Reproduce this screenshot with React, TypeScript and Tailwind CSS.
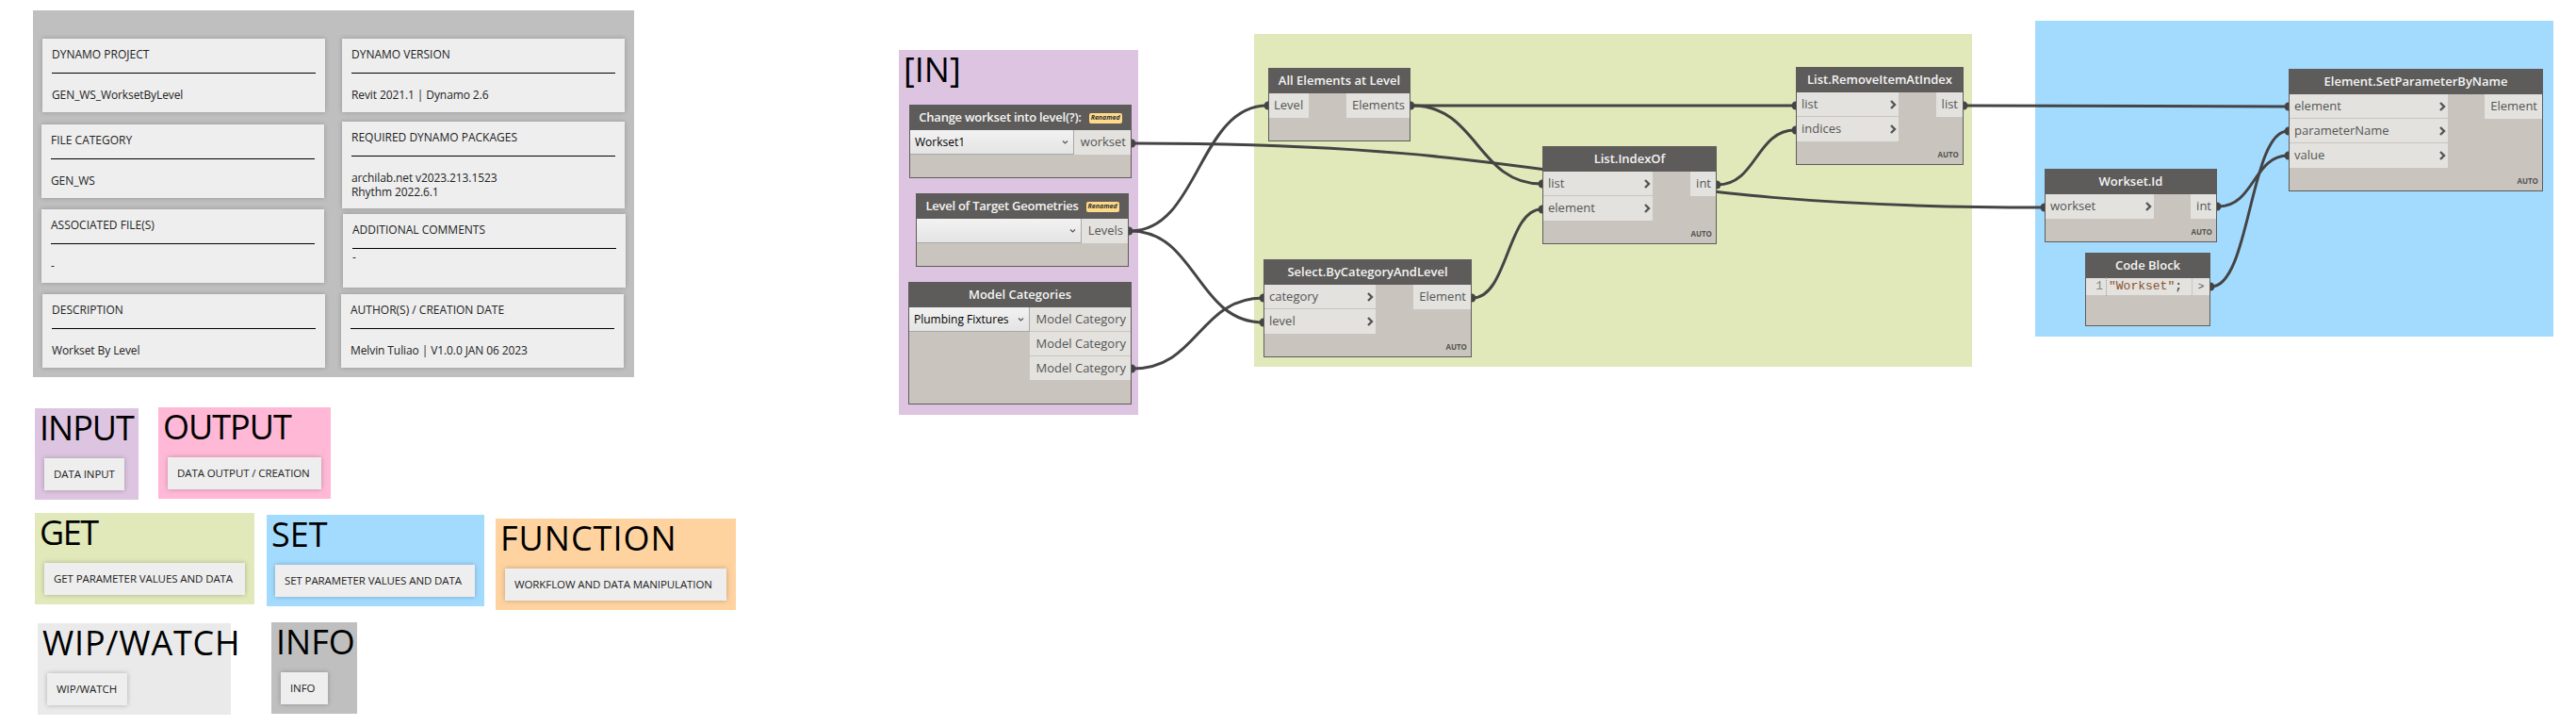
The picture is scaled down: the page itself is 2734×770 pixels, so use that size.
import type { ReactNode } from 'react'

const sans = 'font-["Open_Sans",sans-serif]'

const wires = [
  'M1202 152 C1685 152 1685 220 2168 220',
  'M1200 245 C1272 245 1272 112 1345 112',
  'M1200 245 C1270 245 1270 342 1341 342',
  'M1202 391 C1272 391 1272 316 1341 316',
  'M1499 112 L1905 112',
  'M1499 112 C1568 112 1568 195 1636 195',
  'M1563 316 C1600 316 1600 222 1636 222',
  'M1823 196 C1864 196 1864 138 1905 138',
  'M2085 112 L2428 113',
  'M2355 219 C2392 219 2392 165 2428 165',
  'M2347 304 C2388 304 2388 139 2428 139',
]

const ports = [
  [1201, 152], [1198, 245], [1201, 391],
  [1346, 112], [1497, 112],
  [1341, 316], [1341, 342], [1562, 316],
  [1637, 195], [1637, 222], [1822, 196],
  [1906, 112], [1906, 138], [2084, 112],
  [2170, 220], [2353, 219], [2346, 304],
  [2429, 113], [2429, 139], [2429, 165],
]

function Chevron() {
  return (
    <svg width="8" height="12" viewBox="0 0 8 12" className="shrink-0">
      <path d="M2 2 L6 6 L2 10" fill="none" stroke="#555" strokeWidth="2.4" />
    </svg>
  )
}

function Card({ title, className, children }: { title: string; className: string; children: ReactNode }) {
  return (
    <div className={`w-[300px] bg-[#eeeeee] px-[10px] pt-[8px] shadow-[0_0_5px_rgba(0,0,0,0.22)] ${className}`}>
      <div className="text-[12px] leading-[18px] text-[#222]">{title}</div>
      <div className="mt-[10px] h-px bg-black" />
      {children}
    </div>
  )
}

function Value({ children }: { children: ReactNode }) {
  return <div className="mt-[15px] text-[12px] leading-[15px] tracking-[-0.1px] text-[#222]">{children}</div>
}

function Legend({ title, label, className, buttonClass }: { title: string; label: string; className: string; buttonClass: string }) {
  return (
    <div className={`absolute h-[97px] ${className}`}>
      <div className="h-[53px] pl-[5px] text-[36px] leading-[42px] text-black">{title}</div>
      <div className={`flex h-[34px] items-center bg-[#eeeeee] pl-[10px] text-[11.5px] tracking-[-0.1px] whitespace-nowrap text-[#222] shadow-[0_0_5px_rgba(0,0,0,0.25)] ${buttonClass}`}>
        {label}
      </div>
    </div>
  )
}

function Header({ title, renamed }: { title: string; renamed?: boolean }) {
  return (
    <div className={`flex h-[26px] items-center justify-center gap-[8px] bg-[#5e5c5a] text-[13px] font-semibold whitespace-nowrap text-[#f4f4f4] ${renamed ? 'tracking-[-0.25px]' : ''}`}>
      {title}
      {renamed && (
        <span className="flex h-[11px] w-[35px] items-center justify-center rounded-[2px] bg-[#ffd98a] text-[7px] font-bold tracking-normal text-[#333] italic">
          Renamed
        </span>
      )}
    </div>
  )
}

function Node({ title, inputs, output, inputWidth, outputWidth, auto, className }: {
  title: string
  inputs: string[]
  output: string
  inputWidth: string
  outputWidth: string
  auto?: boolean
  className: string
}) {
  return (
    <div className={`absolute border border-[#5e5c5a] bg-[#c9c5be] ${className}`}>
      <Header title={title} />
      <div className="flex justify-between">
        <div className={inputWidth}>
          {inputs.map((input, i) => (
            <div
              key={input}
              className={`flex h-[26px] items-center justify-between bg-[#e3e2de] pl-[5px] pr-[2px] text-[13px] text-[#555] ${i < inputs.length - 1 ? 'border-b border-[#c9c5be]' : ''}`}
            >
              {input}
              <Chevron />
            </div>
          ))}
        </div>
        <div className={`flex h-[26px] items-center justify-end bg-[#e3e2de] pr-[5px] text-[13px] text-[#555] ${outputWidth}`}>
          {output}
        </div>
      </div>
      <div className="flex h-[24px] items-end justify-end pr-[4px] pb-[5px] text-[8px] leading-[10px] font-bold text-[#555]">
        {auto && 'AUTO'}
      </div>
    </div>
  )
}

function Combo({ value, className }: { value: string; className: string }) {
  return (
    <div className={`flex h-[26px] items-center justify-between border-r border-b border-[#a8a8a8] bg-gradient-to-b from-[#f2f2f2] to-[#e4e4e4] pl-[5px] pr-[5px] text-[12px] whitespace-nowrap text-black ${className}`}>
      <span>{value}</span>
      <svg width="7" height="6" viewBox="0 0 7 6">
        <path d="M1 1.5 L3.5 4 L6 1.5" fill="none" stroke="#555" strokeWidth="1.2" />
      </svg>
    </div>
  )
}

export default function App() {
  return (
    <div className={`relative h-[770px] w-[2734px] overflow-hidden bg-white ${sans}`}>
      {/* info panel */}
      <div className="absolute top-[11px] left-[35px] flex h-[389px] w-[638px] gap-[18px] bg-[#bfbfbf] pl-[9px] pt-[30px]">
        <div>
          <Card title="DYNAMO PROJECT" className="ml-[1px] h-[78px]"><Value>GEN_WS_WorksetByLevel</Value></Card>
          <Card title="FILE CATEGORY" className="mt-[13px] h-[78px]"><Value>GEN_WS</Value></Card>
          <Card title="ASSOCIATED FILE(S)" className="mt-[12px] h-[78px]"><Value>-</Value></Card>
          <Card title="DESCRIPTION" className="ml-[1px] mt-[12px] h-[78px]"><Value>Workset By Level</Value></Card>
        </div>
        <div>
          <Card title="DYNAMO VERSION" className="h-[78px]"><Value>Revit 2021.1 | Dynamo 2.6</Value></Card>
          <Card title="REQUIRED DYNAMO PACKAGES" className="mt-[10px] h-[92px]">
            <Value>archilab.net v2023.213.1523<br />Rhythm 2022.6.1</Value>
          </Card>
          <Card title="ADDITIONAL COMMENTS" className="ml-[1px] mt-[6px] h-[78px]">
            <div className="mt-[1px] text-[12px] leading-[15px] text-[#222]">-</div>
          </Card>
          <Card title="AUTHOR(S) / CREATION DATE" className="mt-[7px] -ml-px h-[78px]"><Value>Melvin Tuliao | V1.0.0 JAN 06 2023</Value></Card>
        </div>
      </div>

      {/* legend */}
      <Legend title="INPUT" label="DATA INPUT" className="top-[433px] left-[37px] w-[110px] bg-[#ddc4e0] tracking-[-1px]" buttonClass="ml-[10px] w-[85px]" />
      <Legend title="OUTPUT" label="DATA OUTPUT / CREATION" className="top-[432px] left-[168px] w-[183px] bg-[#ffb9d6] tracking-[-1px]" buttonClass="ml-[10px] w-[163px]" />
      <Legend title="GET" label="GET PARAMETER VALUES AND DATA" className="top-[544px] left-[37px] w-[233px] bg-[#e1e9ba] tracking-[-1.5px]" buttonClass="ml-[10px] w-[213px]" />
      <Legend title="SET" label="SET PARAMETER VALUES AND DATA" className="top-[546px] left-[283px] w-[231px] bg-[#a3dbff]" buttonClass="ml-[9px] w-[212px]" />
      <Legend title="FUNCTION" label="WORKFLOW AND DATA MANIPULATION" className="top-[550px] left-[526px] w-[255px] bg-[#ffd3a0] tracking-[1px]" buttonClass="ml-[10px] w-[235px]" />
      <Legend title="WIP/WATCH" label="WIP/WATCH" className="top-[661px] left-[40px] w-[205px] bg-[#eaeaea] tracking-[0.8px]" buttonClass="ml-[10px] w-[85px]" />
      <Legend title="INFO" label="INFO" className="top-[660px] left-[288px] w-[91px] bg-[#bfbfbf]" buttonClass="ml-[10px] w-[50px]" />

      {/* graph groups */}
      <div className="absolute top-[53px] left-[954px] h-[387px] w-[254px] bg-[#ddc4e0] pl-[5px] text-[36px] leading-[42px] text-black">[IN]</div>
      <div className="absolute top-[36px] left-[1331px] h-[353px] w-[762px] bg-[#e1e9ba]" />
      <div className="absolute top-[22px] left-[2160px] h-[335px] w-[550px] bg-[#a3dbff]" />

      <svg className="absolute top-0 left-0 h-[770px] w-[2734px]" viewBox="0 0 2734 770" fill="none">
        {wires.map((d) => (
          <path key={d} d={d} stroke="#444" strokeWidth="3" />
        ))}
        {ports.map(([cx, cy]) => (
          <circle key={`${cx}-${cy}`} cx={cx} cy={cy} r="4.5" fill="#444" />
        ))}
      </svg>

      {/* input nodes */}
      <div className="absolute top-[111px] left-[965px] h-[78px] w-[236px] border border-[#5e5c5a] bg-[#c9c5be]">
        <Header title="Change workset into level(?):" renamed />
        <div className="flex">
          <Combo value="Workset1" className="w-[174px]" />
          <div className="flex h-[26px] flex-1 items-center justify-end bg-[#e3e2de] pr-[5px] text-[13px] text-[#555]">workset</div>
        </div>
      </div>
      <div className="absolute top-[205px] left-[972px] h-[78px] w-[226px] border border-[#5e5c5a] bg-[#c9c5be]">
        <Header title="Level of Target Geometries" renamed />
        <div className="flex">
          <Combo value="" className="w-[175px]" />
          <div className="flex h-[26px] flex-1 items-center justify-end bg-[#e3e2de] pr-[5px] text-[13px] text-[#555]">Levels</div>
        </div>
      </div>
      <div className="absolute top-[299px] left-[964px] h-[130px] w-[237px] border border-[#5e5c5a] bg-[#c9c5be]">
        <Header title="Model Categories" />
        <div className="flex justify-between">
          <Combo value="Plumbing Fixtures" className="w-[128px]" />
          <div className="w-[107px]">
            {['a', 'b', 'c'].map((row) => (
              <div key={row} className="flex h-[26px] items-center justify-end border-b border-[#c9c5be] bg-[#e3e2de] pr-[5px] text-[13px] text-[#555]">
                Model Category
              </div>
            ))}
          </div>
        </div>
      </div>

      {/* get nodes */}
      <div className="absolute top-[72px] left-[1346px] h-[78px] w-[151px] border border-[#5e5c5a] bg-[#c9c5be]">
        <Header title="All Elements at Level" />
        <div className="flex justify-between text-[13px] text-[#555]">
          <div className="flex h-[26px] w-[42px] items-center bg-[#e3e2de] pl-[5px]">Level</div>
          <div className="flex h-[26px] w-[67px] items-center justify-end bg-[#e3e2de] pr-[5px]">Elements</div>
        </div>
      </div>
      <Node title="List.IndexOf" inputs={['list', 'element']} output="int" inputWidth="w-[116px]" outputWidth="w-[27px]" auto className="top-[155px] left-[1637px] w-[185px]" />
      <Node title="Select.ByCategoryAndLevel" inputs={['category', 'level']} output="Element" inputWidth="w-[118px]" outputWidth="w-[61px]" auto className="top-[275px] left-[1341px] w-[221px]" />
      <Node title="List.RemoveItemAtIndex" inputs={['list', 'indices']} output="list" inputWidth="w-[108px]" outputWidth="w-[28px]" auto className="top-[71px] left-[1906px] w-[178px]" />

      {/* set nodes */}
      <Node title="Element.SetParameterByName" inputs={['element', 'parameterName', 'value']} output="Element" inputWidth="w-[168px]" outputWidth="w-[61px]" auto className="top-[73px] left-[2429px] w-[270px]" />
      <Node title="Workset.Id" inputs={['workset']} output="int" inputWidth="w-[115px]" outputWidth="w-[27px]" auto className="top-[179px] left-[2170px] w-[183px]" />
      <div className="absolute top-[268px] left-[2213px] h-[78px] w-[133px] border border-[#5e5c5a] bg-[#c9c5be]">
        <Header title="Code Block" />
        <div className="flex h-[18px] items-center bg-[#e3e2de] font-['Liberation_Mono',monospace] text-[13px]">
          <span className="w-[22px] border-r border-dotted border-[#999] pr-[3px] text-right text-[#888]">1</span>
          <span className="ml-[2px] flex-1 text-[#8a5030]">"Workset"<span className="text-[#333]">;</span></span>
          <span className="flex h-full w-[19px] items-center justify-center border-l border-[#c9c5be] text-[11px] text-[#555]">&gt;</span>
        </div>
      </div>
    </div>
  )
}
